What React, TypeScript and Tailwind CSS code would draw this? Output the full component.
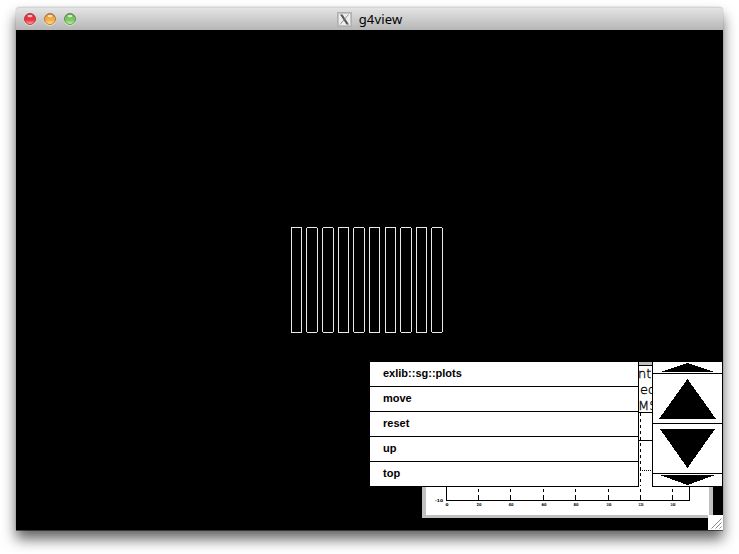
import React from 'react';

const lights = [
  { rim: '#a8303a', mid: '#f0343e', low: '#ffb4b6' },
  { rim: '#ad7030', mid: '#f5ab43', low: '#ffee92' },
  { rim: '#558a48', mid: '#7cc662', low: '#ccf8aa' },
];

const menuItems = ['exlib::sg::plots', 'move', 'reset', 'up', 'top'];

const bars = [
  [11, 10], [26, 11], [42, 11], [58, 10], [73, 11],
  [89, 10], [105, 10], [120, 11], [136, 10], [151, 11],
];

const ticks = [
  { x: 24, label: '0' }, { x: 56, label: '20' }, { x: 88, label: '40' },
  { x: 121, label: '60' }, { x: 153, label: '80' }, { x: 186, label: '100' },
  { x: 218, label: '120' }, { x: 250, label: '140' },
];

function TitleBar() {
  return (
    <header className="relative flex h-[23px] items-center justify-center rounded-t-[4px] border-t border-[#d4d4d4] bg-gradient-to-b from-[#e4e4e4] to-[#b6b6b6]">
      <div className="absolute left-2 top-[5px] flex gap-2">
        {lights.map((c, i) => (
          <svg key={i} width="12" height="13" viewBox="0 0 12 13">
            <defs>
              <linearGradient id={`light${i}`} x1="0" y1="0" x2="0" y2="1">
                <stop offset="0" stopColor={c.rim} />
                <stop offset="0.4" stopColor={c.mid} />
                <stop offset="0.6" stopColor={c.mid} />
                <stop offset="1" stopColor={c.low} />
              </linearGradient>
            </defs>
            <circle cx="6" cy="6.8" r="6" fill="#efefef" />
            <circle cx="6" cy="6" r="5.5" fill={`url(#light${i})`} stroke={c.rim} strokeWidth="0.9" />
            <ellipse cx="6" cy="3" rx="2.6" ry="1.3" fill="#fff" opacity="0.7" />
          </svg>
        ))}
      </div>
      <div className="flex h-full items-center gap-[7px]">
        <svg width="15" height="15" viewBox="0 0 15 15">
          <rect x="0.5" y="0.5" width="14" height="14" fill="#eee" stroke="#b0b0b0" />
          <rect x="1.5" y="1.5" width="12" height="12" fill="none" stroke="#c4c4c4" />
          <path d="M3 2.5h2.5l6.5 10H9.5z" fill="#555" />
          <path d="M11.5 2.5L3 12.5" stroke="#888" strokeWidth="0.9" />
        </svg>
        <span className="font-['Noto_Sans','Open_Sans',sans-serif] text-[13px] leading-[22px] tracking-[0.15px] text-black">g4view</span>
      </div>
    </header>
  );
}

function Detector() {
  return (
    <svg className="absolute left-[264px] top-[190px]" width="180" height="125" shapeRendering="crispEdges">
      {bars.map(([x, w]) => {
        const inset = w === 11 ? 1 : 0;
        return (
          <path
            key={x}
            d={`M${x + inset} 7.5H${x + w + 1 - inset}M${x + inset} 112.5H${x + w + 1 - inset}M${x + 0.5} 8V112M${x + w + 0.5} 8V112`}
            fill="none"
            stroke="#e8ebe8"
          />
        );
      })}
    </svg>
  );
}

function Plot() {
  return (
    <svg className="absolute left-[406px] top-[332px]" width="291" height="156" shapeRendering="crispEdges">
      <rect width="291" height="156" fill="#c0c0c0" />
      <rect x="4" y="4" width="283" height="149" fill="#fff" />
      <path d="M216 3.5H231M216 50.5H231M216 78.5H231M24.5 120V138.5H267.5V120" fill="none" stroke="#000" />
      <path d="M216 108.5H231" stroke="#000" strokeDasharray="1 1" />
      <path d="M218.5 51V124" stroke="#000" strokeDasharray="3 3" />
      {ticks.slice(1).map((t) => (
        <path key={t.x} d={`M${t.x + 0.5} 127V130M${t.x + 0.5} 133V138`} stroke="#000" />
      ))}
      <g className="font-['DejaVu_Sans',sans-serif]" fontSize="4" fontWeight="bold" fill="#000" textAnchor="middle">
        {ticks.map((t) => (
          <text key={t.x} x={t.x + 1} y="144" textLength={t.x === 24 ? 3 : 5} lengthAdjust="spacingAndGlyphs">{t.label}</text>
        ))}
        <text x="17" y="140" textLength="8" lengthAdjust="spacingAndGlyphs">-10</text>
      </g>
      <g className="font-['DejaVu_Sans',sans-serif] font-extralight" fontSize="13" fill="#000" stroke="#000" strokeWidth="0.3">
        <text x="216" y="16">nt</text>
        <text x="218" y="32">ec</text>
        <text x="216" y="48">MS</text>
      </g>
    </svg>
  );
}

function Menu() {
  return (
    <div className="absolute left-[354px] top-[332px] flex h-[125px] w-[269px] flex-col border-r border-black bg-white">
      {menuItems.map((label) => (
        <div key={label} className="flex h-[25px] items-center border-b border-black pb-[2px] pl-[13px] font-['Liberation_Sans',Arial,sans-serif] text-[11px] font-bold leading-none text-black">
          {label}
        </div>
      ))}
    </div>
  );
}

function Arrow({ points, height }: { points: string; height: number }) {
  return (
    <svg width="69" height={height} className="block border-b border-black" shapeRendering="crispEdges">
      <polygon points={points} />
    </svg>
  );
}

function ScrollArrows() {
  return (
    <div className="absolute left-[636px] top-[332px] flex h-[125px] w-[71px] flex-col border-x border-black bg-white">
      <Arrow height={12} points="7,10 34.5,1 62,10" />
      <Arrow height={50} points="6,45 34.5,5 63,45" />
      <Arrow height={50} points="7,5 62,5 34.5,44" />
      <Arrow height={13} points="7,1 62,1 34.5,11" />
    </div>
  );
}

export default function App() {
  return (
    <div className="h-[554px] w-[739px] overflow-hidden bg-white px-4 pt-[7px]">
      <div className="w-[707px] rounded-t-[4px] shadow-[0_1px_0_0_rgba(0,0,0,0.5),0_0_1px_0_rgba(0,0,0,0.5),0_9px_14px_0_rgba(0,0,0,0.62)]">
        <TitleBar />
        <main className="relative h-[500px] overflow-hidden bg-black">
          <Detector />
          <Plot />
          <Menu />
          <ScrollArrows />
          <svg className="absolute bottom-0 right-0" width="15" height="15">
            <rect width="15" height="15" fill="#fff" />
            <path d="M3.5 13.5L13.5 3.5M7.5 13.5L13.5 7.5M11.5 13.5L13.5 11.5" stroke="#888" strokeWidth="1" />
          </svg>
        </main>
      </div>
    </div>
  );
}
